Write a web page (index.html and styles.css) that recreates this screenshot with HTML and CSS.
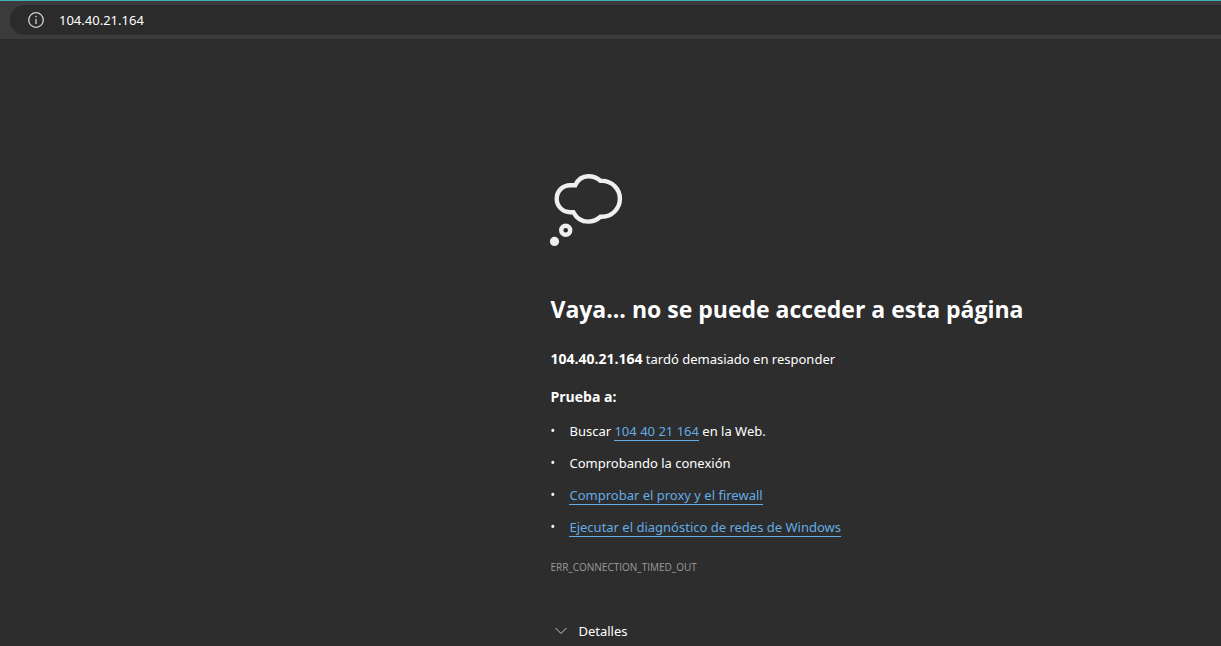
FILE: index.html
```html
<!DOCTYPE html>
<html lang="es">
<head>
<meta charset="utf-8">
<title>104.40.21.164</title>
<link rel="stylesheet" href="styles.css">
</head>
<body>
<header class="toolbar">
  <div class="address">
    <button class="info" type="button" aria-label="Información del sitio">
      <svg width="18" height="18" viewBox="0 0 18 18" fill="none" stroke="#d2d2d2" aria-hidden="true">
        <circle cx="9" cy="9" r="7.3" stroke-width="1.3"/>
        <path d="M9 8v5" stroke-width="1.3"/>
        <circle cx="9" cy="5.6" r=".8" fill="#d2d2d2" stroke="none"/>
      </svg>
    </button>
    <input class="url" type="text" value="104.40.21.164" aria-label="Dirección">
  </div>
</header>
<main class="content">
  <svg class="cloud" width="72" height="72" viewBox="0 0 72 72" fill="none" stroke="#efefef" stroke-width="4.4" aria-hidden="true">
    <path d="M25.3 11.2H20.2A13.5 13.5 0 0 0 20.2 38.2H23.4C26.5 44.2 32 47.6 38.2 47.6C43 47.6 47.3 45.9 50.6 42.7H52A17.9 17.9 0 0 0 52 6.900H50.6C47.2 3.8 43 2.2 38.2 2.2C32.6 2.2 27.8 5.8 25.3 11.2Z"/>
    <circle cx="15.7" cy="56.3" r="4.500"/>
    <circle cx="4.5" cy="67.400" r="4.6" fill="#efefef" stroke="none"/>
  </svg>
  <h1 class="title">Vaya... no se puede acceder a esta página</h1>
  <p class="reason"><strong class="host">104.40.21.164</strong> tardó demasiado en responder</p>
  <h2 class="subtitle">Prueba a:</h2>
  <ul class="tips">
    <li class="tip"><span>Buscar <a class="link" href="#">104 40 21 164</a> en la Web.</span></li>
    <li class="tip"><span>Comprobando la conexión</span></li>
    <li class="tip"><span><a class="link" href="#">Comprobar el proxy y el firewall</a></span></li>
    <li class="tip"><span><a class="link" href="#">Ejecutar el diagnóstico de redes de Windows</a></span></li>
  </ul>
  <p class="code">ERR_CONNECTION_TIMED_OUT</p>
  <button class="details" type="button">
    <svg width="12" height="8" viewBox="0 0 12 8" fill="none" stroke="#c8c8c8" aria-hidden="true"><path d="M.5 1L6 6.5L11.5 1"/></svg>
    Detalles
  </button>
</main>
</body>
</html>
```
FILE: styles.css
```css
* {
  box-sizing: border-box;
}

body {
  margin: 0;
  background: #2d2d2d;
  color: #fff;
  font: 13px/20px "Noto Sans", "Open Sans", sans-serif;
}

.toolbar {
  padding: 4px 0 4px 10px;
  border-top: 1px solid #3fb4b8;
  background: #3b3b3b;
}

.address {
  display: flex;
  align-items: center;
  gap: 14px;
  height: 30px;
  padding-left: 17px;
  border-radius: 15px 0 0 15px;
  background: #2b2b2b;
}

.info,
.details {
  display: flex;
  align-items: center;
  padding: 0;
  border: 0;
  background: none;
  color: inherit;
  font: inherit;
}

.url {
  flex: 1;
  min-width: 0;
  padding: 0;
  border: 0;
  outline: 0;
  background: none;
  color: inherit;
  font: inherit;
}

.content {
  padding: 135px 16px 4px calc(45% + 1px);
}

.cloud {
  display: block;
  overflow: visible;
}

.title {
  margin: 47px 0 0;
  font-family: "Open Sans", "Noto Sans", sans-serif;
  font-size: 23px;
  line-height: 32px;
}

.reason {
  margin: 24px 0 0;
}

.host {
  font-family: "Open Sans", "Noto Sans", sans-serif;
  font-size: 14px;
}

.subtitle {
  margin: 18px 0 0;
  font-family: "Open Sans", "Noto Sans", sans-serif;
  font-size: 14px;
  line-height: 20px;
}

.tips {
  display: flex;
  flex-direction: column;
  gap: 12px;
  margin: 14px 0 0;
  padding: 0;
  list-style: none;
}

.tip {
  display: flex;
}

.tip::before {
  content: "•";
  width: 19px;
  font-size: 12px;
}

.link {
  border-bottom: 1px solid #63ace5;
  color: #63ace5;
  text-decoration: none;
}

.code {
  margin: 22px 0 0;
  color: #9b9b9b;
  font-family: "Open Sans", "Noto Sans", sans-serif;
  font-size: 10px;
  line-height: 16px;
}

.details {
  gap: 11px;
  margin: 46px 0 0 5px;
}
```
